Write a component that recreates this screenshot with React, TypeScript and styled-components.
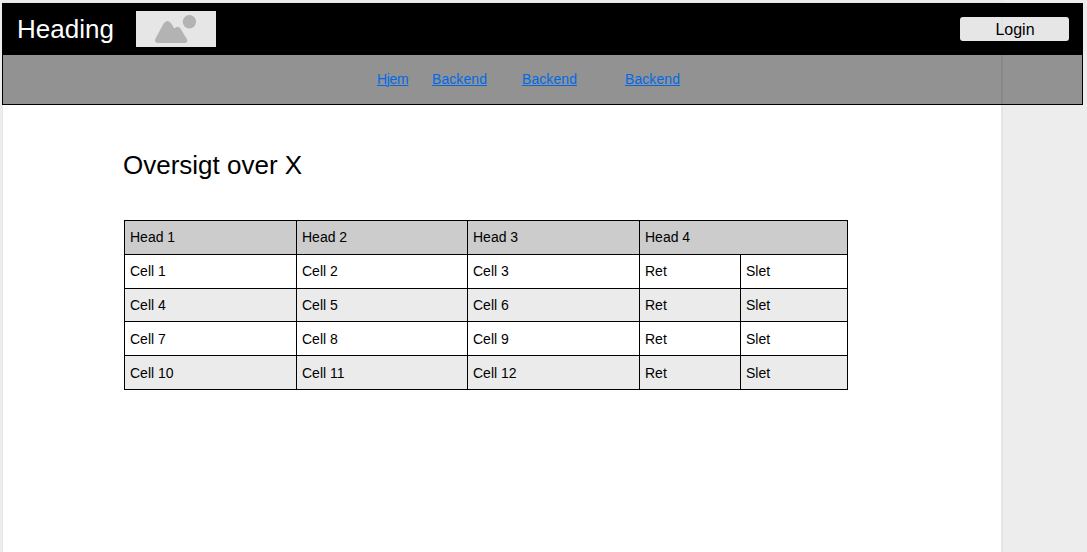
import React from "react";
import styled, { createGlobalStyle } from "styled-components";

const GlobalStyle = createGlobalStyle`
  * { box-sizing: border-box; }
  html, body { margin: 0; height: 100%; background: #ededed; }
  body {
    overflow: hidden;
    font-family: "Liberation Sans", Arial, sans-serif;
    font-size: 14px;
    color: #000;
  }
`;

const Screen = styled.div`
  display: flex;
  flex-direction: column;
  height: 552px;
  padding: 3px 4px 0 2px;
  background: linear-gradient(#ebebeb 0 2px, #e6e6e6 2px 3px) 2px 0 / 1001px 3px no-repeat;
`;

const TopBar = styled.header`
  display: flex;
  align-items: flex-start;
  flex: none;
  height: 52px;
  padding: 8px 14px 0 15px;
  background: #000;
`;

const Brand = styled.div`
  width: 119px;
  padding-top: 3px;
  font-size: 26px;
  line-height: 30px;
  color: #fff;
`;

const ImagePlaceholder = styled.div`
  width: 80px;
  height: 36px;
  background: #e6e6e6;

  svg { display: block; }
`;

const LoginButton = styled.button`
  width: 109px;
  height: 24px;
  margin: 6px 0 0 auto;
  padding: 1px 0 0 1px;
  border: 0;
  border-radius: 3px;
  background: linear-gradient(90deg, #e6e6e6 41px, #e2e2e2 41px 43px, #e6e6e6 43px);
  font-family: inherit;
  font-size: 16px;
  line-height: 22px;
  color: #000;
`;

const Nav = styled.nav`
  display: flex;
  flex: none;
  height: 50px;
  padding: 16px 0 0 374px;
  border: solid #000;
  border-width: 0 1px 1px;
  background: linear-gradient(90deg, #929292 998px, #898989 998px 1000px, #929292 1000px);
`;

const NavItem = styled.div<{ $slot: number }>`
  width: ${(p) => p.$slot}px;
  line-height: 16px;
`;

const NavLink = styled.a<{ $tracking: number }>`
  letter-spacing: ${(p) => p.$tracking}px;
  color: #006ae6;
  text-decoration: underline;
  text-decoration-thickness: 1px;
`;

const Page = styled.main`
  flex: 1;
  width: 1001px;
  padding: 45px 0 0 120px;
  border: solid #e6e6e6;
  border-width: 0 2px 0 1px;
  background: #fff;
`;

const Title = styled.h1`
  margin: 0 0 40px;
  font-size: 26px;
  font-weight: 400;
  line-height: 30px;
`;

const Table = styled.div`
  width: 724px;
  margin-left: 1px;
  border: solid #000;
  border-width: 1px 0 0 1px;
`;

const Row = styled.div<{ $head?: boolean; $fill: string; $height: number }>`
  display: grid;
  grid-template-columns: 172px 171px 172px ${(p) => (p.$head ? "208px" : "101px 107px")};
  height: ${(p) => p.$height}px;
  background: ${(p) => p.$fill};
`;

const Cell = styled.div<{ $top?: number }>`
  padding: ${(p) => p.$top ?? 8}px 5px 0;
  border: solid #000;
  border-width: 0 1px 1px 0;
  line-height: 16px;
`;

const links = [
  { label: "Hjem", slot: 55, tracking: -0.3 },
  { label: "Backend", slot: 90, tracking: 0.08 },
  { label: "Backend", slot: 103, tracking: 0.08 },
  { label: "Backend", slot: 60, tracking: 0.08 },
];

const rows = [
  { cells: ["Cell 1", "Cell 2", "Cell 3", "Ret", "Slet"], height: 34, top: 8 },
  { cells: ["Cell 4", "Cell 5", "Cell 6", "Ret", "Slet"], height: 33, top: 8 },
  { cells: ["Cell 7", "Cell 8", "Cell 9", "Ret", "Slet"], height: 34, top: 9 },
  { cells: ["Cell 10", "Cell 11", "Cell 12", "Ret", "Slet"], height: 34, top: 9 },
];

export default function App() {
  return (
    <>
      <GlobalStyle />
      <Screen>
        <TopBar>
          <Brand>Heading</Brand>
          <ImagePlaceholder>
            <svg width="80" height="36" viewBox="0 0 80 36" fill="#b3b3b3">
              <circle cx="53.4" cy="10.7" r="6.7" />
              <path d="M22 32 Q17.7 31.5 19.5 27.5 L27.5 12.8 Q31.5 7.2 35.5 12.8 L38.2 17.5 Q42 14 44.8 18 L50.8 28 Q52.3 31.5 49 32 Z" />
            </svg>
          </ImagePlaceholder>
          <LoginButton>Login</LoginButton>
        </TopBar>
        <Nav>
          {links.map((link, i) => (
            <NavItem key={i} $slot={link.slot}>
              <NavLink href="#" $tracking={link.tracking}>
                {link.label}
              </NavLink>
            </NavItem>
          ))}
        </Nav>
        <Page>
          <Title>Oversigt over X</Title>
          <Table>
            <Row $head $fill="#cccccc" $height={34}>
              {["Head 1", "Head 2", "Head 3", "Head 4"].map((h) => (
                <Cell key={h}>{h}</Cell>
              ))}
            </Row>
            {rows.map((row, i) => (
              <Row key={i} $fill={i % 2 ? "#ebebeb" : "#ffffff"} $height={row.height}>
                {row.cells.map((text) => (
                  <Cell key={text} $top={row.top}>
                    {text}
                  </Cell>
                ))}
              </Row>
            ))}
          </Table>
        </Page>
      </Screen>
    </>
  );
}
